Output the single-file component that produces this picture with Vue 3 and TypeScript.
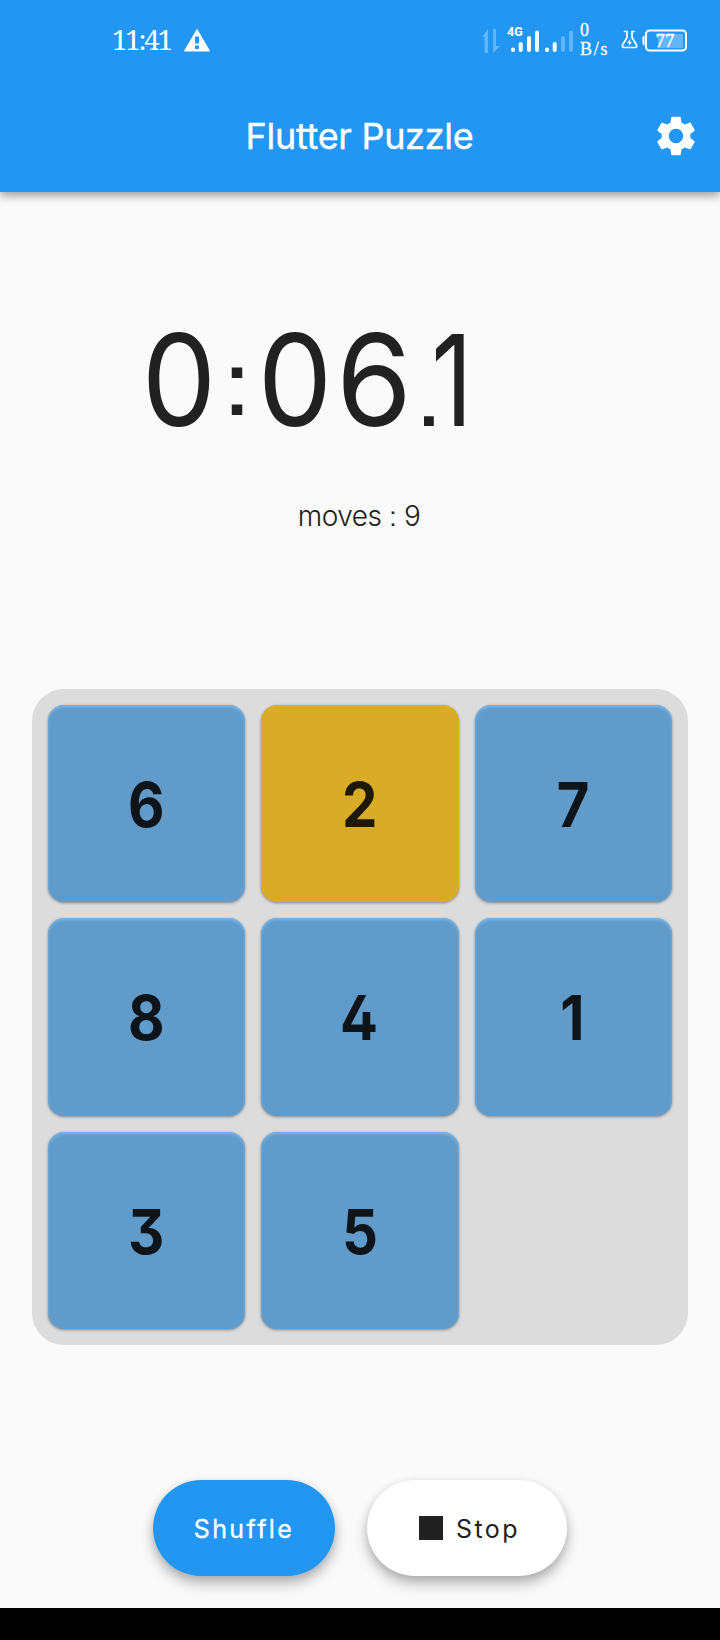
<script setup lang="ts">
import { ref } from 'vue'

interface Cell {
  value: number
  placed: boolean
}

const timer: { char: string; kind: string }[] = [
  { char: '0', kind: 'zero' },
  { char: ':', kind: 'colon' },
  { char: '0', kind: 'zero' },
  { char: '6', kind: 'six' },
  { char: '.', kind: 'dot' },
  { char: '1', kind: 'one' },
]
const moves = ref(9)
const tiles = ref<Cell[]>(
  [6, 2, 7, 8, 4, 1, 3, 5].map((value) => ({ value, placed: value === 2 })),
)
</script>

<template>
  <main class="screen">
    <header class="top">
      <div class="status">
        <span class="clock">11:41</span>
        <svg class="warn" width="28" height="25" viewBox="0 0 28 25">
          <path d="M14 1.500 26.500 23H1.500Z" fill="#fff" stroke="#fff" stroke-linejoin="round" />
          <path d="M12 8.500h4v7h-4zM12 17.500h4v3.500h-4z" fill="#2196f3" />
        </svg>
        <svg class="signals" width="96" height="40" viewBox="0 0 96 40">
          <g fill="#fff" fill-opacity=".3">
            <path d="M6 9v24H2.500V17H0zM11 9h3v17h4l-7 7z" />
          </g>
          <text x="25" y="15.500" class="net">4G</text>
          <g stroke="#fff" stroke-width="4" stroke-linecap="round">
            <path d="M31 29.500v.5M38.700 24v6M47 18v12M55 12.500v17.500M65 29.500v.5M72.700 24v6" />
            <path d="M81 18v12M89 12.500v17.500" stroke-opacity=".3" />
          </g>
        </svg>
        <span class="rate"><span class="digit">0</span><span>B/s</span></span>
        <svg class="battery" width="68" height="24" viewBox="0 0 68 24">
          <g fill="none" stroke="#fff" stroke-width="1.700" stroke-linejoin="round" stroke-linecap="round">
            <path d="M3.500 3.500h2M11 3.500h2M6 3.500v6L1.500 17Q1 19.500 3 19.500H14Q16.500 19.500 15.500 17L11 9.500V3.500" />
          </g>
          <path d="M9.500 11 6 15h2.200L7.500 18 11 14H8.800z" fill="#fff" />
          <path d="M23.500 7.500q-2 0-2 3v4q0 3 2 3z" fill="#fff" />
          <rect x="25" y="2.500" width="40" height="20" rx="3.500" fill="none" stroke="#fff" stroke-width="2" />
          <rect x="37" y="6" width="25" height="14" fill="#fff" fill-opacity=".3" />
          <text x="44" y="19" text-anchor="middle" class="pct">77</text>
        </svg>
      </div>
      <div class="bar">
        <h1 class="title">Flutter Puzzle</h1>
        <svg class="gear" width="48" height="48" viewBox="0 0 24 24" fill="#fff">
          <path d="M19.140 12.940c.04-.3.060-.61.060-.94 0-.32-.02-.64-.07-.94l2.030-1.580c.18-.14.230-.41.120-.61l-1.920-3.320c-.12-.22-.37-.29-.59-.22l-2.390.96c-.5-.38-1.030-.7-1.620-.94L14.400 2.810c-.04-.24-.24-.41-.48-.41h-3.840c-.24 0-.43.170-.47.410l-.36 2.540c-.59.240-1.130.570-1.620.940l-2.390-.96c-.22-.08-.47 0-.59.220L2.740 8.870c-.12.210-.08.470.120.610l2.030 1.580c-.05.300-.09.630-.09.940s.02.640.070.940l-2.030 1.580c-.18.140-.23.410-.12.610l1.920 3.320c.12.220.37.290.59.220l2.390-.96c.5.380 1.030.7 1.620.940l.36 2.540c.05.240.24.410.48.410h3.840c.24 0 .44-.17.470-.41l.36-2.540c.59-.24 1.130-.56 1.620-.94l2.390.96c.22.080.47 0 .59-.22l1.920-3.320c.12-.22.070-.47-.12-.61zM12 15.600c-1.980 0-3.600-1.620-3.600-3.600s1.620-3.600 3.600-3.600 3.600 1.620 3.600 3.600-1.620 3.600-3.600 3.600z" />
        </svg>
      </div>
    </header>

    <section class="score">
      <div class="timer">
        <span v-for="(c, i) in timer" :key="i" class="glyph" :class="c.kind">{{ c.char }}</span>
      </div>
      <p class="moves">moves : {{ moves }}</p>
    </section>

    <section class="board">
      <button v-for="t in tiles" :key="t.value" class="tile" :class="{ placed: t.placed }">
        <span class="number">{{ t.value }}</span>
      </button>
    </section>

    <section class="actions">
      <button class="pill primary"><span>Shuffle</span></button>
      <button class="pill plain"><i class="square"></i><span>Stop</span></button>
    </section>

    <footer class="nav"></footer>
  </main>
</template>

<style>
body {
  margin: 0;
}
</style>

<style scoped>
.screen {
  box-sizing: border-box;
  width: 720px;
  height: 1640px;
  display: flex;
  flex-direction: column;
  background: #fafafa;
  color: #212121;
  font-family: Inter, "Liberation Sans", sans-serif;
  overflow: hidden;
}
button {
  border: 0;
  padding: 0;
  margin: 0;
  color: inherit;
  font: inherit;
}
.top {
  flex: none;
  height: 192px;
  background: #2196f3;
  color: #fff;
  box-shadow: 0 4px 8px rgba(0, 0, 0, 0.24), 0 3px 10px rgba(0, 0, 0, 0.16);
}
.status {
  height: 80px;
  display: flex;
  align-items: center;
  padding: 0 32px 0 112px;
  font-family: "Noto Serif", "Liberation Serif", serif;
}
.clock {
  width: 58px;
  margin-top: -2px;
  font-size: 27.5px;
  letter-spacing: -2.1px;
  white-space: nowrap;
}
.warn {
  margin-left: 13px;
}
.signals {
  margin-left: auto;
}
.net {
  font: 700 12.5px Roboto, sans-serif;
  fill: #fff;
}
.rate {
  width: 41px;
  margin-left: 2px;
  display: flex;
  flex-direction: column;
  font-family: "Liberation Serif", serif;
  font-size: 18px;
  line-height: 19px;
  letter-spacing: 1.8px;
  -webkit-text-stroke: 0.3px #fff;
}
.battery {
  flex: none;
  margin-right: -1px;
}
.pct {
  font: 19px "Liberation Serif", serif;
  fill: #fff;
  stroke: #fff;
  stroke-width: 0.4px;
}
.bar {
  height: 112px;
  display: grid;
  grid-template-columns: 68px 1fr 68px;
  align-items: center;
}
.title {
  grid-column: 2;
  margin: 0 0 0 -1px;
  text-align: center;
  font-size: 36px;
  font-weight: 400;
  letter-spacing: -0.3px;
  -webkit-text-stroke: 0.4px #fff;
}
.score {
  height: 497px;
  display: flex;
  flex-direction: column;
  align-items: center;
}
.timer {
  align-self: flex-start;
  margin: 108px 0 0 141px;
  display: flex;
  height: 160px;
  line-height: 160px;
  font-size: 127px;
  font-weight: 400;
  font-feature-settings: "ss07";
}
.glyph {
  display: flex;
  justify-content: center;
}
.zero {
  width: 76px;
  transform: scaleX(0.93);
}
.colon {
  width: 40px;
  padding-top: 2px;
  font-size: 92px;
}
.six {
  width: 82px;
  transform: scaleX(0.96);
}
.dot {
  width: 28px;
  padding-top: 15px;
  font-size: 86px;
}
.one {
  width: 18px;
  transform: scaleX(0.8);
}
.moves {
  margin: 38px 0 0 -2px;
  font-size: 28px;
  line-height: 36px;
  font-weight: 300;
  letter-spacing: -0.45px;
  font-feature-settings: "ss07";
}
.board {
  box-sizing: border-box;
  width: 656px;
  height: 656px;
  margin: 0 32px;
  padding: 16px;
  display: grid;
  grid-template-columns: repeat(3, 1fr);
  grid-template-rows: repeat(3, 1fr);
  gap: 16px;
  background: #dcdcdc;
  border-radius: 32px;
}
.tile {
  display: flex;
  justify-content: center;
  align-items: center;
  border-radius: 16px;
  background: #619bca;
  color: #0d151b;
  font-size: 62.5px;
  font-weight: 700;
  box-shadow: inset 0 2px 3px #7ab6e8, 0 1px 3px rgba(0, 0, 0, 0.4);
}
.number {
  margin: 1px 1px 0 0;
  transform: scaleX(0.9);
  font-feature-settings: "cv02", "cv09";
}
.tile.placed {
  background: #d8ac27;
  color: #1e1805;
  box-shadow: 0 1px 3px rgba(0, 0, 0, 0.4);
}
.actions {
  flex: 1;
  padding-top: 135px;
  display: flex;
  justify-content: center;
  align-items: flex-start;
  gap: 32px;
}
.pill {
  height: 96px;
  border-radius: 48px;
  display: flex;
  justify-content: center;
  align-items: center;
  font-size: 25px;
  letter-spacing: 2.4px;
  box-shadow: 0 8px 14px rgba(0, 0, 0, 0.24), 0 3px 8px rgba(0, 0, 0, 0.12);
}
.pill span {
  margin-top: 2px;
}
.primary {
  box-sizing: border-box;
  width: 182px;
  background: #2196f3;
  color: #fff;
  font-weight: 400;
  -webkit-text-stroke: 0.3px #fff;
}
.plain {
  box-sizing: border-box;
  width: 200px;
  padding-left: 5px;
  background: #fff;
  gap: 13px;
}
.square {
  width: 24px;
  height: 24px;
  background: #212121;
}
.nav {
  flex: none;
  height: 32px;
  background: #000;
  position: relative;
}
</style>
